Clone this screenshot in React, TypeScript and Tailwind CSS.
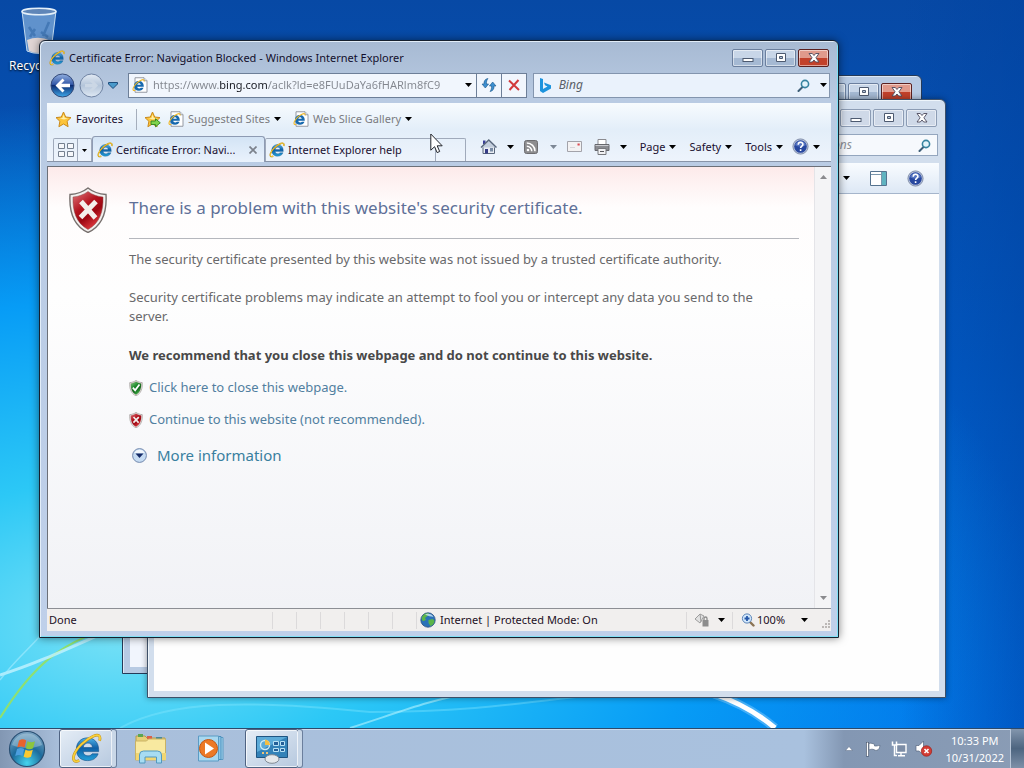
import { useState } from "react"

function Arrow(props:any) {
    return (
        <svg className={"shrink-0 " + (props.className || "text-black")} width="7" height="4" viewBox="0 0 7 4" aria-hidden="true">
            <path d="M0 0h7L3.500 4z" fill="currentColor"/>
        </svg>
    )
}

function IeLogo(props:any) {
    const size = props.size || 16
    return (
        <svg className="shrink-0" width={size} height={size} viewBox="0 0 32 32" aria-hidden="true">
            <defs>
                <linearGradient id="ieBlue" x1="0" y1="0" x2="0" y2="1">
                    <stop offset="0" stopColor="#4fb4ea"/>
                    <stop offset="0.450" stopColor="#0f5fa6"/>
                    <stop offset="1" stopColor="#23a0d8"/>
                </linearGradient>
            </defs>
            <path fillRule="evenodd" fill="url(#ieBlue)" stroke="#0d4a86" strokeWidth="0.6" d="M17 5C24 5 28.500 10 28.500 17v2.200H12.500c.3 2.800 2.200 4.400 5 4.400 2 0 3.500-.8 4.300-2.100h6.200C26.400 26 22.600 28.500 17 28.500 10 28.500 5.500 24 5.500 17S10 5 17 5zM12.600 15h9.600c-.3-2.900-2.100-4.600-4.700-4.600s-4.500 1.700-4.900 4.600z"/>
            <path d="M29.500 8C31 3 28.500 1 23.500 3 15 6.500 5.500 15.500 3 23c-1.500 5 .5 7.600 5.500 5.500" fill="none" stroke="#b98a16" strokeWidth="2.800"/>
            <path d="M29.500 8C31 3 28.500 1 23.500 3 15 6.500 5.500 15.500 3 23c-1.500 5 .5 7.600 5.500 5.500" fill="none" stroke="#f8cf3a" strokeWidth="1.900"/>
        </svg>
    )
}

function PageIcon() {
    return (
        <svg className="shrink-0" width="16" height="16" viewBox="0 0 32 32" aria-hidden="true">
            <path d="M6 1.500h18l6 6v23H6z" fill="#fff" stroke="#8a8f98" strokeWidth="1.800"/>
            <path d="M24 1.500v6h6" fill="#dde3ea" stroke="#8a8f98" strokeWidth="1.500"/>
            <path fillRule="evenodd" fill="#1769ae" d="M14 8c6 0 9.500 4 9.500 10v1.500H10.500c.3 2 1.700 3.500 4 3.500 1.500 0 2.500-.5 3.200-1.500h5.300C21.700 25.500 18.500 27.500 14 27.500 8 27.500 4 24 4 18S8 8 14 8zm-3.500 7.500h7c-.3-2-1.500-3.200-3.300-3.200-2 0-3.300 1.200-3.700 3.200z"/>
            <path d="M24 9c1-4-2-4.500-6-2.500C11 10 5 16 2.500 22c-1.500 4 0 6 4 4.500" fill="none" stroke="#f0b92a" strokeWidth="2.200"/>
        </svg>
    )
}

function Star(props:any) {
    return (
        <svg className="shrink-0" width="17" height="17" viewBox="0 0 17 17" aria-hidden="true">
            <path d="M8.500 1l2.200 5 5.300.6-3.900 3.700 1 5.400-4.600-2.700-4.600 2.700 1-5.400L1 6.600 6.300 6z" fill="#fcc43a" stroke="#c98a1c" strokeLinejoin="round"/>
            <path d="M8.500 3.500l1.300 3.400 3.200.5-4 1-4.300-1 2.700-.5z" fill="#fff0a8"/>
            {props.arrow && <path d="M7 10h4.500V7.800l4.800 4-4.800 4v-2.300H7z" fill="#7fd34c" stroke="#2f8423" strokeWidth="0.900"/>}
        </svg>
    )
}

function Shield(props:any) {
    const ok = props.ok
    const id = ok ? "shieldOk" : "shieldBad"
    return (
        <svg className="shrink-0" width={props.width} height={props.height} viewBox="0 0 38 46" aria-hidden="true">
            <defs>
                <linearGradient id={id} x1="0" y1="0" x2="0.600" y2="1">
                    <stop offset="0" stopColor={ok ? "#8fd08a" : "#e0787c"}/>
                    <stop offset="0.450" stopColor={ok ? "#1f8a2c" : "#b3141f"}/>
                    <stop offset="0.700" stopColor={ok ? "#136a1e" : "#9c0712"}/>
                    <stop offset="1" stopColor={ok ? "#43b64a" : "#e03a3f"}/>
                </linearGradient>
            </defs>
            <path d="M19 1c5 4 11 6 18 6.500 1 17-3 31-18 38C4 38.500 0 24.500 1 7.500 8 7 14 5 19 1z" fill="#f3f0ee" stroke="#77706e" strokeWidth="1.400"/>
            <path d="M19 4.500c4.500 3.300 9.500 5 15 5.500.5 14-3 26-15 32.500C7 36 3.500 24 4 10c5.500-.5 10.500-2.200 15-5.500z" fill={"url(#" + id + ")"} stroke="#8a4a4a" strokeWidth="0.500"/>
            {ok
                ? <path d="M10 22l6.500 7.500L29 13" fill="none" stroke="#fff" strokeWidth="5"/>
                : <path d="M12 14.500l14.500 16.500M27 14.500L11.500 30.500" fill="none" stroke="#f4efec" strokeWidth="5"/>}
        </svg>
    )
}

function HelpIcon() {
    return (
        <svg className="shrink-0" width="17" height="17" viewBox="0 0 17 17" aria-hidden="true">
            <circle cx="8.500" cy="8.500" r="7.600" fill="#b9c4dc" stroke="#6e7c9c" strokeWidth="0.800"/>
            <circle cx="8.500" cy="8.500" r="6.300" fill="#27479f"/>
            <path d="M3 7a5.800 5.800 0 0 1 11 0c-3 2-8 2-11 0z" fill="#6a88cf" opacity="0.700"/>
            <path d="M6.200 6.800c0-3.400 4.800-3.200 4.700-.4 0 1.700-2.300 1.800-2.300 3.600M8.600 11.300v1.800" fill="none" stroke="#fff" strokeWidth="1.600"/>
        </svg>
    )
}

function Magnifier() {
    return (
        <svg className="shrink-0" width="13" height="13" viewBox="0 0 13 13" aria-hidden="true">
            <path d="M6 7.500L1.500 12" stroke="#3f5f78" strokeWidth="2" strokeLinecap="round"/>
            <circle cx="8" cy="5" r="3.600" fill="#e3f3fa" stroke="#36839f" strokeWidth="1.600"/>
        </svg>
    )
}

// minimise, maximise and close, shared by all three windows
function Caption(props:any) {
    const base = "flex h-[18px] w-[31px] items-center justify-center rounded-[2px] border shadow-[inset_0_0_0_1px_rgba(255,255,255,0.5)] "
    const plain = props.inactive
        ? "border-[#8c9cb4] bg-[#cfd9e8]"
        : "border-[#6b7f9e] bg-linear-to-b from-[#c8d6e8] from-50% to-[#a5b9d3] to-50%"
    const close = props.inactive
        ? "border-[#8c9cb4] bg-[#cfd9e8]"
        : "border-[#5a2020] bg-linear-to-b from-[#e09a8c] from-50% to-[#c2412b] to-50%"
    return (
        <div className="flex shrink-0 gap-[2px]">
            <button className={base + plain} aria-label="Minimize">
                <svg width="12" height="10" viewBox="0 0 12 10"><rect x="1" y="5.500" width="10" height="3" fill="#fff" stroke="#4d5a70"/></svg>
            </button>
            <button className={base + plain} aria-label="Maximize">
                <svg width="12" height="10" viewBox="0 0 12 10"><path d="M1.500.5h9v8h-9z" fill="#fff" stroke="#4d5a70"/><path d="M4.500 3.500h3v2h-3z" fill="#b5c4d8" stroke="#4d5a70"/></svg>
            </button>
            <button className={base + close} aria-label="Close">
                <svg width="12" height="10" viewBox="0 0 12 10"><path d="M1 .5h3.300L6 2.500 7.700.5H11L7.900 4.800 11 9H7.700L6 7 4.300 9H1l3.100-4.200z" fill="#fff" stroke="#4d4a5c" strokeWidth="0.900"/></svg>
            </button>
        </div>
    )
}

function Wallpaper() {
    return (
        <div className="absolute inset-0 overflow-hidden bg-linear-to-b from-[#0749a5] via-[#0159c3] to-[#006fe8]">
            <div className="absolute inset-0 bg-[radial-gradient(ellipse_90%_72%_at_12%_86%,#7ae2f6_0%,#2cc8f6_28%,#079cf6_62%,transparent_100%)]"></div>
            <div className="absolute inset-0 bg-[linear-gradient(to_left,rgba(0,66,160,0.5),transparent_12%)]"></div>
            <svg className="absolute inset-0 h-full w-full" viewBox="0 0 1024 728" preserveAspectRatio="none" fill="none" aria-hidden="true">
                <path d="M0 718C30 670 60 638 125 625" stroke="#8fe070" strokeWidth="2"/>
                <path d="M0 675C35 664 65 650 110 630" stroke="#c3f2ff" strokeWidth="3" opacity="0.800"/>
                <path d="M0 680C15 660 28 650 40 636" stroke="#a8ecff" strokeWidth="1.500" opacity="0.600"/>
                <path d="M120 728C170 700 250 700 370 712 480 712 540 700 620 692" stroke="#8feaff" strokeWidth="2" opacity="0.350"/>
                <path d="M350 728C400 712 430 700 470 693" stroke="#b6f3ff" strokeWidth="2" opacity="0.600"/>
                <path d="M714 694C735 701 756 712 775 728" stroke="#8fd2ff" strokeWidth="9" opacity="0.450"/>
                <path d="M714 694C735 701 756 712 775 728" stroke="#fff" strokeWidth="5"/>
            </svg>
        </div>
    )
}

function MenuButton(props:any) {
    return (
        <button className={"flex shrink-0 items-center gap-1 " + (props.className || "")}>
            {props.children}
            <Arrow className={props.arrow}/>
        </button>
    )
}

function NavBar() {
    const [url, setUrl] = useState("https://www.bing.com/aclk?ld=e8FUuDaYa6fHARlm8fC9")
    const [query, setQuery] = useState("")
    return (
        <div className="mt-[3px] flex h-[26px] shrink-0 items-center pr-px pl-[3px]">
            <button className="shrink-0" aria-label="Back">
                <svg width="25" height="25" viewBox="0 0 25 25">
                    <defs>
                        <linearGradient id="back" x1="0" y1="0" x2="0" y2="1">
                            <stop offset="0" stopColor="#91afe0"/>
                            <stop offset="0.450" stopColor="#3459a8"/>
                            <stop offset="0.500" stopColor="#0d2d74"/>
                            <stop offset="1" stopColor="#3fa9ea"/>
                        </linearGradient>
                    </defs>
                    <circle cx="12.500" cy="12.500" r="11.500" fill="url(#back)" stroke="#354a78"/>
                    <path d="M12.500 5.500l2 2-3.200 3.200H20v3.600h-8.700l3.200 3.200-2 2-7-7z" fill="#fff"/>
                </svg>
            </button>
            <button className="ml-1 shrink-0" aria-label="Forward">
                <svg width="25" height="25" viewBox="0 0 25 25">
                    <defs>
                        <linearGradient id="fwd" x1="0" y1="0" x2="0" y2="1">
                            <stop offset="0" stopColor="#e3ebf4"/>
                            <stop offset="0.500" stopColor="#b4c5da"/>
                            <stop offset="1" stopColor="#dfe9f4"/>
                        </linearGradient>
                    </defs>
                    <circle cx="12.500" cy="12.500" r="11.500" fill="url(#fwd)" stroke="#6f83a3"/>
                    <path d="M12.500 6l-2 2 3.200 3H6v3.200h7.700l-3.200 3 2 2 6.500-6.600z" fill="#cbd7e5"/>
                </svg>
            </button>
            <button className="mr-[10px] ml-1 shrink-0" aria-label="Recent pages">
                <svg width="10" height="7" viewBox="0 0 10 7"><path d="M.5.500h9v1.500L5 6.500.5 2z" fill="#4a9acb" stroke="#1d4d7c"/></svg>
            </button>
            <div className="flex h-[25px] min-w-0 flex-[7] items-stretch border border-[#6d7f98] bg-[#f1f6fd]">
                <div className="flex min-w-0 flex-1 items-center gap-[5px] px-[3px]">
                    <PageIcon/>
                    <input className="min-w-0 flex-1 bg-[linear-gradient(90deg,#82868e_66px,#161820_66px,#161820_115px,#82868e_115px)] bg-clip-text text-transparent outline-none" aria-label="Address" value={url} onChange={(e) => setUrl(e.target.value)}/>
                    <button className="px-px" aria-label="Show address list"><Arrow/></button>
                </div>
                <button className="flex w-[25px] items-center justify-center border-l border-[#6d7f98]" aria-label="Refresh">
                    <svg width="16" height="16" viewBox="0 0 16 16">
                        <path d="M7 1.500C3.800 2 2.800 4.300 3 7H1l3.300 4L7.600 7H5.500C5.300 4.500 5.800 3 7 1.500z" fill="#3d8fd0" stroke="#1b5688" strokeWidth="0.600"/>
                        <path d="M9 14.500c3.200-.5 4.200-2.800 4-5.500h2l-3.300-4L8.400 9h2.100c.2 2.500-.3 4-1.500 5.500z" fill="#3d8fd0" stroke="#1b5688" strokeWidth="0.600"/>
                    </svg>
                </button>
                <button className="flex w-[25px] items-center justify-center border-l border-[#6d7f98]" aria-label="Stop">
                    <svg width="12" height="12" viewBox="0 0 12 12"><path d="M1 1.500L11 11M10.500 1L1.500 11" stroke="#d23a3c" strokeWidth="2"/></svg>
                </button>
            </div>
            <div className="ml-[6px] flex h-[25px] min-w-0 flex-[5] items-center border border-[#8395ae] bg-[#eaf2fc] px-[6px]">
                <svg className="shrink-0" width="11" height="15" viewBox="0 0 11 15" aria-hidden="true">
                    <path d="M0 0l3 1v10l4.500-2.500L5 7.300 4 4.500l7 2.700v3.300L3 15l-3-2z" fill="#1c93dd"/>
                </svg>
                <input className="ml-2 min-w-0 flex-1 text-[12px] italic outline-none placeholder:text-[#5a5f68]" aria-label="Search" placeholder="Bing" value={query} onChange={(e) => setQuery(e.target.value)}/>
                <button className="shrink-0" aria-label="Run search"><Magnifier/></button>
                <button className="-mr-1 ml-[10px] shrink-0" aria-label="Search options"><Arrow/></button>
            </div>
        </div>
    )
}

function FavoritesBar() {
    return (
        <div className="flex h-8 items-center pl-2 text-[#7a7b80]">
            <button className="flex items-center gap-1 text-[#1a1030]"><Star/>Favorites</button>
            <div className="mr-[7px] ml-[13px] h-[21px] w-px bg-[#a5aebc]"></div>
            <button aria-label="Add to Favorites bar"><Star arrow/></button>
            <MenuButton className="ml-[7px]"><PageIcon/>Suggested Sites</MenuButton>
            <MenuButton className="ml-3"><PageIcon/>Web Slice Gallery</MenuButton>
        </div>
    )
}

function TabRow() {
    return (
        <div className="flex h-[27px] items-end border-b border-[#8894a8] pl-[6px] text-[#1a1030]">
            <div className="flex h-[23px] shrink-0 rounded-t-[2px] border border-b-0 border-[#a0aabb]">
                <button className="flex w-[23px] items-center justify-center" aria-label="Quick tabs">
                    <svg width="16" height="14" viewBox="0 0 16 14" fill="#f6f8fb" stroke="#75808f"><path d="M.5.500h6v5h-6zM9.500.500h6v5h-6zM.5 8.500h6v5h-6zM9.500 8.500h6v5h-6z"/></svg>
                </button>
                <button className="flex w-[14px] items-center justify-center border-l border-[#a0aabb]" aria-label="Tab list">
                    <svg width="5" height="3" viewBox="0 0 5 3"><path d="M0 0h5L2.500 3z"/></svg>
                </button>
            </div>
            <div className="-mb-px flex h-[26px] min-w-0 flex-[0_1_173px] items-center rounded-t-[3px] border border-b-0 border-[#8e9bb3] bg-linear-to-b from-[#d3e4f5] to-[#eaf2fc] px-1">
                <button className="flex min-w-0 flex-1 items-center gap-[3px]"><IeLogo/><span className="truncate">Certificate Error: Navi...</span></button>
                <button className="ml-2 shrink-0 pr-[3px]" aria-label="Close tab">
                    <svg width="8" height="8" viewBox="0 0 8 8"><path d="M.5.500l7 7M7.500.500l-7 7" stroke="#7c828c" strokeWidth="1.700"/></svg>
                </button>
            </div>
            <button className="flex h-[23px] min-w-0 flex-[0_1_171px] items-center gap-[3px] rounded-t-[2px] border border-b-0 border-[#a0aabb] px-[3px]">
                <IeLogo/><span className="truncate">Internet Explorer help</span>
            </button>
            <button className="h-[23px] w-[30px] shrink-0 rounded-tr-[2px] border-t border-r border-[#a0aabb]" aria-label="New tab"></button>
            <div className="flex h-full flex-1 items-center justify-end gap-[10px] pr-[11px] pb-[3px]">
                <MenuButton>
                    <svg className="mr-[6px]" width="17" height="17" viewBox="0 0 17 17" role="img" aria-label="Home">
                        <path d="M3 2.500h2.500V6H3z" fill="#3a3f96"/>
                        <path d="M3 8.500h11.500v7H3z" fill="#e9edf3" stroke="#59677c"/>
                        <path d="M1 9.500L8.800 2l7.700 7.500" fill="#c3cedd" stroke="#59677c" strokeWidth="1.400"/>
                        <path d="M5 11h3v4.500H5z" fill="#363c86"/><path d="M10 10h3v3.500h-3z" fill="#788ba4"/>
                    </svg>
                </MenuButton>
                <MenuButton arrow="text-[#7d8795]">
                    <svg className="mr-2" width="14" height="14" viewBox="0 0 14 14" role="img" aria-label="Feeds">
                        <rect x="0.500" y="0.500" width="13" height="13" rx="2" fill="#8d8d8f" stroke="#6d6d70"/>
                        <circle cx="4" cy="10" r="1.300" fill="#fff"/>
                        <path d="M2.800 6.200a5 5 0 0 1 5 5M2.800 3a8.200 8.200 0 0 1 8.200 8.200" fill="none" stroke="#fff" strokeWidth="1.500"/>
                    </svg>
                </MenuButton>
                <button aria-label="Read mail">
                    <svg width="15" height="11" viewBox="0 0 15 11"><path d="M.5.500h14v10H.5z" fill="#f3f2f3" stroke="#a3a3aa"/><path d="M10.500 2.500h2.200v2h-2.200z" fill="#db4a50"/><path d="M3 6.500h5" stroke="#d5d5da"/></svg>
                </button>
                <MenuButton>
                    <svg className="mr-[6px] ml-[2px]" width="16" height="16" viewBox="0 0 16 16" role="img" aria-label="Print">
                        <path d="M4 .5h8V6H4z" fill="#fff" stroke="#8b8b90"/>
                        <path d="M1 5.500h14v6H1z" fill="#8a8b90" stroke="#66676c"/>
                        <path d="M1.500 6.500h13" stroke="#c9cace"/>
                        <path d="M4 9.500h8v6H4z" fill="#f2f2f4" stroke="#77787c"/>
                        <path d="M6 12.500h4" stroke="#55565a"/>
                    </svg>
                </MenuButton>
                <MenuButton className="ml-[3px]">Page</MenuButton>
                <MenuButton className="ml-[3px]">Safety</MenuButton>
                <MenuButton className="ml-[3px]">Tools</MenuButton>
                <MenuButton className="-ml-px"><HelpIcon/></MenuButton>
            </div>
        </div>
    )
}

function ErrorPage() {
    return (
        <div className="flex min-h-0 flex-1 border-t border-l border-[#6c7078] bg-[#f1f2f6]">
            <div className="flex min-w-0 flex-1 gap-[22px] overflow-hidden bg-[linear-gradient(to_bottom,#fdeaea,#fffdfd_40px,#fefefe_130px,#f1f2f6)] pt-5 pr-[15px] pl-[21px] text-[13px] leading-[19px] text-[#69696b]">
                <Shield width={38} height={46}/>
                <div className="min-w-0 flex-1">
                    <h1 className="mt-[9px] border-b border-[#b5b7bd] pb-[18px] text-[17px] leading-6 text-[#5f7098]">There is a problem with this website's security certificate.</h1>
                    <p className="mt-[11px] pr-5">The security certificate presented by this website was not issued by a trusted certificate authority.</p>
                    <p className="mt-[19px] pr-5">Security certificate problems may indicate an attempt to fool you or intercept any data you send to the server.</p>
                    <p className="mt-5 font-bold text-[#484848]">We recommend that you close this webpage and do not continue to this website.</p>
                    <a href="#close" className="mt-[13px] flex items-center gap-[6px] text-[#517fa0]"><Shield ok width={14} height={16}/>Click here to close this webpage.</a>
                    <a href="#continue" className="mt-[13px] flex items-center gap-[6px] text-[#517fa0]"><Shield width={14} height={16}/>Continue to this website (not recommended).</a>
                    <button className="mt-[14px] ml-[3px] flex items-center gap-[10px] text-[15px] leading-6 text-[#397f9f]">
                        <svg width="15" height="15" viewBox="0 0 15 15" aria-hidden="true">
                            <circle cx="7.500" cy="7.500" r="6.900" fill="#c6dcf3" stroke="#7489ad"/>
                            <path d="M2.500 5a5.500 5.500 0 0 1 10 0z" fill="#f3f8fd"/>
                            <path d="M3.500 5.500h8l-4 4.500z" fill="#142a66"/>
                        </svg>
                        More information
                    </button>
                </div>
            </div>
            <div className="flex w-[17px] shrink-0 flex-col items-center justify-between border-l border-[#e4e4e8] bg-[#f4f4f6] py-2">
                <button aria-label="Scroll up"><Arrow className="rotate-180 text-[#8a8a8e]"/></button>
                <button aria-label="Scroll down"><Arrow className="text-[#8a8a8e]"/></button>
            </div>
        </div>
    )
}

function StatusBar() {
    return (
        <div className="flex h-[23px] shrink-0 items-center border-t border-[#8c8e94] bg-[#f1efee] text-[#1d1025]">
            <span className="flex-1 pl-[2px]">Done</span>
            {[1, 2, 3, 4, 5, 6].map((n) => (
                <span key={n} className="h-[17px] w-6 border-l border-[#dcdadb]"></span>
            ))}
            <div className="flex h-[17px] flex-[0_0_270px] items-center gap-1 border-l border-[#dcdadb] pl-[3px]">
                <svg width="16" height="16" viewBox="0 0 16 16" aria-hidden="true">
                    <circle cx="8" cy="8" r="7.200" fill="#2a72b8" stroke="#2a4e80" strokeWidth="0.800"/>
                    <path d="M2 5c2-4 5-4 7-3.500L7.500 4 5 6l1 2-2.500 1C2 9 1.500 7 2 5zM8.500 8l4-1 2 1.500c0 3-2 5-4 5.500L8.500 11z" fill="#5cb548"/>
                    <path d="M5 2.500C8 1 12 2 13.500 5 11 4 8 4.500 5 2.500z" fill="#cfe9fa" opacity="0.800"/>
                </svg>
                Internet | Protected Mode: On
            </div>
            <button className="flex h-[17px] w-[46px] items-center justify-center gap-2 border-l border-[#dcdadb]" aria-label="Privacy report">
                <svg width="16" height="14" viewBox="0 0 16 14"><path d="M1 6l5-5 4 2-4 7zM6 1l1 8" fill="#e2e2e2" stroke="#9c9c9c"/><path d="M8.500 7h6v6.500h-6z" fill="#8d8d8d"/><path d="M10 7V5.500c0-2 3-2 3 0V7" fill="none" stroke="#8d8d8d" strokeWidth="1.300"/></svg>
                <Arrow/>
            </button>
            <button className="flex h-[17px] flex-[0_0_99px] items-center border-l border-[#dcdadb] pl-2">
                <svg className="mr-[2px]" width="14" height="14" viewBox="0 0 14 14" aria-hidden="true"><path d="M9 9l3.500 3.500" stroke="#8b7455" strokeWidth="2.400" strokeLinecap="round"/><circle cx="6" cy="5.500" r="4.600" fill="#d3e8fb" stroke="#5b84b8"/><path d="M6 3v5M3.500 5.500h5" stroke="#2557a8" strokeWidth="1.800"/></svg>
                100%
                <span className="ml-4"><Arrow/></span>
                <svg className="mt-2 ml-auto" width="10" height="10" viewBox="0 0 10 10" fill="#bcb8b6" aria-hidden="true"><path d="M7 1h2v2H7zM4 4h2v2H4zM7 4h2v2H7zM1 7h2v2H1zM4 7h2v2H4zM7 7h2v2H7z"/></svg>
            </button>
        </div>
    )
}

function Browser() {
    return (
        <div className="absolute top-10 right-[185px] bottom-[90px] left-[39px] flex flex-col rounded-t-[6px] border border-[#16202e] bg-linear-to-b from-[#a7bad3] via-[#b9cbe3] via-10% to-[#bfd0ea] px-[7px] pb-[6px] shadow-[inset_1px_1px_0_#e2edf8,inset_-1px_-1px_0_#7fe0f5,0_0_8px_rgba(0,0,0,0.5)]">
            <div className="flex h-7 shrink-0 items-center pt-[5px] pr-[2px]">
                <div className="flex min-w-0 flex-1 items-center gap-1 pl-[2px] text-[#120f2c]">
                    <IeLogo/><span className="truncate">Certificate Error: Navigation Blocked - Windows Internet Explorer</span>
                </div>
                <Caption/>
            </div>
            <NavBar/>
            <div className="mt-[5px] mb-1 shrink-0 bg-linear-to-b from-[#f7fbfe] via-[#e3eef9] via-45% to-[#eef4fc]">
                <FavoritesBar/>
                <TabRow/>
            </div>
            <ErrorPage/>
            <StatusBar/>
        </div>
    )
}

function TaskButton(props:any) {
    return (
        <button aria-label={props.label} className="relative flex h-[39px] w-[54px] items-center justify-center rounded-[3px] border border-[#4f6382] bg-linear-to-br from-[#e5edf6] to-[#b7c9df] shadow-[inset_0_0_0_1px_rgba(255,255,255,0.7)]">
            {props.children}
            <span className="absolute -top-px -right-[5px] h-[39px] w-[5px] rounded-r-[3px] border border-l-0 border-[#6b7f9d] bg-[#c9d7e7]"></span>
        </button>
    )
}

function Taskbar() {
    return (
        <div className="relative flex h-10 shrink-0 items-center border-t border-[#2d4a6b] bg-[linear-gradient(90deg,#8297b3,#a9bfdb_60px,#a9c1de_calc(100%-220px),#8397b3_calc(100%-180px),#8a9cb5)] shadow-[inset_0_1px_0_#cbdcee]">
            <button className="ml-2 shrink-0" aria-label="Start">
                <svg width="38" height="38" viewBox="0 0 38 38">
                    <defs>
                        <radialGradient id="orb" cx="0.500" cy="0.900" r="0.900">
                            <stop offset="0" stopColor="#45d4ee"/>
                            <stop offset="0.500" stopColor="#1c6b9c"/>
                            <stop offset="1" stopColor="#7fa6c4"/>
                        </radialGradient>
                    </defs>
                    <circle cx="19" cy="19" r="17.500" fill="url(#orb)" stroke="#294f73" strokeWidth="1.200"/>
                    <path d="M4 15a15.500 15.500 0 0 1 30 0c-8 4-22 4-30 0z" fill="#d8e8f2" opacity="0.350"/>
                    <path d="M11 10.500c3-1.800 5-1.500 7.200 0l-1.700 7c-2.300-1.400-4.500-1.500-7.200 0z" fill="#e8632d"/>
                    <path d="M19.500 11.200c2.600 1.300 5 1.200 7.500 0l-1.900 7c-2.500 1.300-5 1.200-7.300 0z" fill="#8cc63e"/>
                    <path d="M9 19c2.700-1.500 5-1.300 7.200 0l-1.800 7c-2.300-1.400-4.400-1.400-7.200 0z" fill="#4c9ede"/>
                    <path d="M17.500 19.700c2.500 1.300 4.800 1.200 7.300 0l-1.800 7c-2.500 1.300-5 1.200-7.400 0z" fill="#fcc92f"/>
                </svg>
            </button>
            <div className="ml-[13px] flex">
                <TaskButton label="Internet Explorer"><IeLogo size={31}/></TaskButton>
            </div>
            <button className="ml-[21px] shrink-0" aria-label="Windows Explorer">
                <svg width="34" height="31" viewBox="0 0 34 31">
                    <path d="M2 3h9l2 2h18v7H2z" fill="#e6cf78" stroke="#b59c4d"/>
                    <path d="M4 1h5v3H4z" fill="#5ca550"/><path d="M13 3h5v3h-5z" fill="#d9614a"/><path d="M22 4h6v3h-6z" fill="#4a8a98"/>
                    <path d="M1.500 8h11l2-2h17v21h-30z" fill="#f8e9a0" stroke="#c9b264"/>
                    <path d="M2 20h30v7H2z" fill="#f1d672"/>
                    <path d="M5.500 30V22q0-4 4-4h14q4 0 4 4v8h-5v-6H11v6z" fill="#a7dcf2" stroke="#5399bf"/>
                </svg>
            </button>
            <button className="ml-[29px] shrink-0" aria-label="Windows Media Player">
                <svg width="30" height="27" viewBox="0 0 30 27">
                    <path d="M6 2.500h20v22H6z" fill="#a5d5ee" stroke="#5b9bc4"/><path d="M4 1.500h20v23H4z" fill="#8cc5e6" stroke="#4b8fbc"/>
                    <path d="M1.500 1h20v25h-20z" fill="#a9d8f0" stroke="#5b9bc4"/>
                    <circle cx="11.500" cy="13.500" r="9" fill="#ec7926" stroke="#c45713"/><path d="M8 7.500L17 13.500 8 19.500z" fill="#fff"/>
                </svg>
            </button>
            <div className="ml-[18px] flex">
                <TaskButton label="Control Panel">
                    <svg width="34" height="30" viewBox="0 0 34 30">
                        <path d="M1.500 2.500h31v21h-31z" fill="#3382b8" stroke="#1f5582"/><path d="M2 3h30L2 18z" fill="#5cabd8"/>
                        <circle cx="10" cy="11" r="4.500" fill="none" stroke="#cdeaf7" strokeWidth="1.400"/><path d="M10 11V5.500a5.500 5.500 0 0 1 5 5.500z" fill="#f3be45"/>
                        <path d="M18.500 7.500h5v4h-5zM25.500 7.500h4v4h-4zM18.500 14.500h5v3h-5zM25.500 14.500h4v3h-4z" fill="#245f98" stroke="#b8e2f5"/>
                        <path d="M7 19h2M11 19h2" stroke="#ecc37b" strokeWidth="2"/>
                        <ellipse cx="17" cy="25" rx="7" ry="4.300" fill="#e5e8eb" stroke="#818a94"/>
                    </svg>
                </TaskButton>
            </div>
            <div className="ml-auto flex h-full items-center">
                <button className="mr-3" aria-label="Show hidden icons"><svg width="8" height="5" viewBox="0 0 8 5"><path d="M4 .5L7.500 4.500H.5z" fill="#fff" stroke="#5a6b84" strokeWidth="0.500"/></svg></button>
                <button className="mr-[10px]" aria-label="Action Center"><svg width="16" height="16" viewBox="0 0 16 16"><path d="M2.500 1v14.500" stroke="#3c4c64" strokeWidth="3"/><path d="M2.500 1.500V15" stroke="#fff" strokeWidth="1.600"/><path d="M4 2.500c2.500-1 4 .5 5.500.8V5c2 .3 3.500-.4 5.500-.7-.5 3-1 4-3 5-2 .5-2.500-.8-4-1-1.500-.3-2.500 0-4 .7z" fill="#fff" stroke="#4c5c74" strokeWidth="0.600"/></svg></button>
                <button className="mr-2" aria-label="Network"><svg width="16" height="16" viewBox="0 0 16 16"><path d="M5.500 3.500h9.500v8H5.500z" fill="#7c8da6" stroke="#fff" strokeWidth="1.400"/><path d="M10 12v2.500M7 14.800h7" stroke="#fff" strokeWidth="1.400"/><path d="M1.500.500v3.500h4V.500M3.500 4v10.500H6" fill="none" stroke="#fff" strokeWidth="1.500"/></svg></button>
                <button className="mr-3" aria-label="Volume"><svg width="18" height="17" viewBox="0 0 18 17"><path d="M1 5.500h3L8.500 1v14L4 11H1z" fill="#fff" stroke="#56667e" strokeWidth="0.700"/><circle cx="11.500" cy="11" r="5.200" fill="#d43c34" stroke="#9c201a" strokeWidth="0.700"/><path d="M9.500 9l4 4M13.500 9l-4 4" stroke="#fff" strokeWidth="1.600"/></svg></button>
                <div className="mr-[6px] text-center leading-[17px] text-white">
                    <p>10:33 PM</p>
                    <p>10/31/2022</p>
                </div>
                <button className="h-full w-[14px] border-l border-[#b8c6d8] bg-linear-to-b from-[#8396ad] via-[#4d6580] to-[#7d90a8]" aria-label="Show desktop"></button>
            </div>
        </div>
    )
}

export default function App() {
    return (
        <div className="relative flex h-screen flex-col overflow-hidden font-['Noto_Sans',sans-serif] text-[11px] leading-4">
            <div className="relative min-h-0 flex-1">
                <Wallpaper/>
                <div className="absolute top-[7px] left-[9px] flex flex-col gap-1 text-[12px] text-white">
                    <svg className="ml-3" width="37" height="47" viewBox="0 0 37 47" aria-hidden="true">
                        <path d="M1 4l5 40q12 5 24 0L35 4z" fill="#b9d9f2" fillOpacity="0.500" stroke="#c3dbf0"/>
                        <path d="M6 33l2 11q10 4 20 0l2-10q-12-6-24-1z" fill="#f0ded6" opacity="0.900"/>
                        <ellipse cx="18" cy="4.500" rx="17" ry="3.200" fill="#5f86b8" stroke="#e3eff9" strokeWidth="1.500"/>
                        <path d="M8 20l6 9M14 22l-5 8M28 15l-6 14M20 25l7 5" fill="none" stroke="#27609f" strokeWidth="2.500" opacity="0.500"/>
                    </svg>
                    <span className="[text-shadow:0_1px_2px_#000]">Recycle Bin</span>
                </div>

                <div className="absolute top-[75px] right-[102px] bottom-[54px] left-[122px] flex flex-col rounded-t-[6px] border border-[#253a58] bg-[#b7cae3] px-[7px] pb-[6px] shadow-[inset_1px_1px_0_#dce8f5]">
                    <div className="flex h-8 items-center justify-end pr-[2px]"><Caption/></div>
                    <div className="flex-1 bg-[#f1f5fd]"></div>
                </div>

                <div className="absolute top-[99px] right-[78px] bottom-[30px] left-[147px] flex flex-col rounded-t-[6px] border border-[#3e5068] bg-[#d2deed] px-[6px] pb-[6px] shadow-[inset_1px_1px_0_#eef5fb,0_0_6px_rgba(0,0,0,0.4)]">
                    <div className="flex h-[27px] shrink-0 items-end justify-end pr-[2px]"><Caption inactive/></div>
                    <div className="mt-[7px] mr-px flex h-[22px] w-[208px] shrink-0 items-center self-end border border-[#94a6be] bg-[#f6f9fd] pr-[6px]">
                        <input className="min-w-0 flex-1 pl-2 text-[12px] italic outline-none placeholder:text-[#8b9099]" aria-label="Search network connections" placeholder="Network Connections"/>
                        <Magnifier/>
                    </div>
                    <div className="mt-[7px] flex h-[31px] shrink-0 items-center justify-end border-b border-[#a5b5cb] bg-linear-to-b from-[#f9fcff] to-[#dde8f5] pr-[15px]">
                        <button aria-label="View options"><Arrow/></button>
                        <button className="mx-5" aria-label="Preview pane"><svg width="17" height="15" viewBox="0 0 17 15"><path d="M.5.500h16v14H.5z" fill="#fff" stroke="#55738f"/><path d="M1 3.500h10M11.500 1v13" stroke="#7b97ad"/><path d="M12 1h4v13h-4z" fill="#5fb3c0"/></svg></button>
                        <button aria-label="Help"><HelpIcon/></button>
                    </div>
                    <div className="flex-1 bg-[#fefefe]"></div>
                </div>

                <Browser/>

                <svg className="absolute top-[133px] left-[430px]" width="13" height="21" viewBox="0 0 13 21" aria-hidden="true">
                    <path d="M.8 1v16.200l3.800-3.500 2.500 5.900 2.600-1.100-2.500-5.700h5z" fill="#fff" stroke="#23262c"/>
                </svg>
            </div>
            <Taskbar/>
        </div>
    )
}
